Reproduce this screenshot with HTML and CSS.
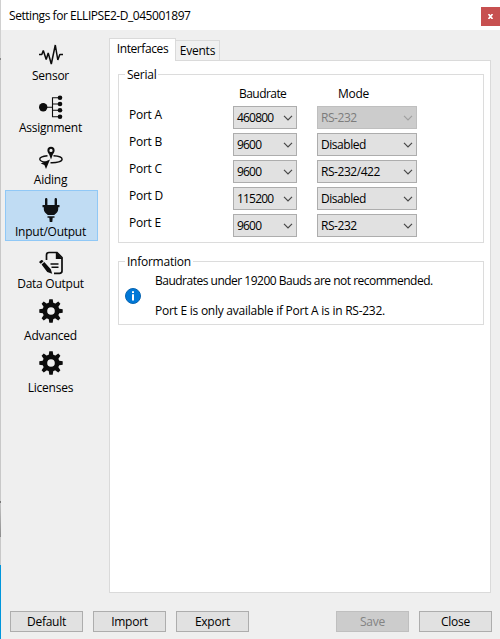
FILE: index.html
```html
<!DOCTYPE html>
<html lang="en">
<head>
<meta charset="utf-8">
<title>Settings for ELLIPSE2-D_045001897</title>
<link rel="stylesheet" href="styles.css">
</head>
<body>
<svg class="defs" width="0" height="0" aria-hidden="true">
  <symbol id="chevron" viewBox="0 0 10 6"><path d="M1 .8l4 4 4-4" fill="none" stroke="currentColor" stroke-width="1.2"/></symbol>
  <symbol id="gear" viewBox="0 0 24 24">
    <g fill="#0c0c0c">
      <path fill-rule="evenodd" d="M12 3.500a8.500 8.500 0 1 0 0 17 8.500 8.500 0 0 0 0-17zm0 4.700a3.800 3.800 0 1 1 0 7.600 3.800 3.800 0 0 1 0-7.600z"/>
      <path d="M10.300.3h3.400l.8 5h-5zM10.300 23.700h3.400l.8-5h-5zM.3 10.300v3.400l5 .8v-5zM23.700 10.300v3.400l-5 .8v-5z"/>
      <path transform="rotate(45 12 12)" d="M10.500.2h3l1 5h-5zM10.500 23.800h3l1-5h-5zM.2 10.500v3l5 1v-5zM23.800 10.500v3l-5 1v-5z"/>
    </g>
  </symbol>
</svg>
<div class="window">
  <div class="edge"><i class="e1"></i><i class="e2"></i><i class="e3"></i><i class="e4"></i><i class="e5"></i><i class="e6"></i><i class="e7"></i></div>
  <header class="titlebar">
    <h1>Settings for ELLIPSE2-D_045001897</h1>
    <button class="x" aria-label="Close window"><svg width="5" height="5" viewBox="0 0 5 5"><path d="M.5 0l4 5M4.500 0l-4 5" stroke="#fff" stroke-width="1.600"/></svg></button>
  </header>
  <div class="body">
    <nav class="side">
      <a class="item"><svg width="24" height="24" viewBox="0 0 24 24"><path d="M0 11.500h2.800l1.500-4 2.900 9 2-6.500 3.100 11L16.300 2l2.500 15 2-5.500H24" fill="none" stroke="#0c0c0c" stroke-width="1.500" stroke-linejoin="bevel"/></svg><span>Sensor</span></a>
      <a class="item"><svg width="24" height="24" viewBox="0 0 24 24"><g fill="#0c0c0c"><circle cx="4.200" cy="12.300" r="4.200"/><circle cx="21" cy="2.700" r="2.300"/><circle cx="21" cy="9" r="2.300"/><circle cx="21" cy="15.300" r="2.300"/><circle cx="21" cy="21.700" r="2.300"/></g><path d="M5 12.300h8.500M21 2.700h-7.500v19H21M13.500 9H21M13.500 15.300H21" fill="none" stroke="#0c0c0c" stroke-width="1.100"/></svg><span>Assignment</span></a>
      <a class="item aiding"><svg width="24" height="24" viewBox="0 0 24 24"><path d="M8.500 9.800C3.800 10.300.7 11.600.8 13.200c.1 1.500 2.500 2.600 6 3.100M14.500 9.800c5 .3 8.600 1.700 8.600 3.500 0 2.200-5 3.700-11.600 3.400" fill="none" stroke="#0c0c0c" stroke-width="1.400"/><path fill="#0c0c0c" fill-rule="evenodd" d="M12 .8a3.600 3.600 0 0 0-3.600 3.600c0 1.500.9 2.500 1.800 4L12 13.500l1.800-5.100c.9-1.500 1.800-2.500 1.800-4A3.600 3.600 0 0 0 12 .8zm0 2a1.600 1.600 0 1 1 0 3.200 1.600 1.600 0 0 1 0-3.200z"/><path fill="#0c0c0c" d="M11 13.500L7 23l-1.600-4L1.800 17.500z"/></svg><span>Aiding</span></a>
      <a class="item selected"><svg width="24" height="24" viewBox="0 0 24 24"><path fill="#101214" d="M6 1.200a1.200 1.200 0 0 1 2.400 0V7h7.200V1.200a1.200 1.200 0 0 1 2.400 0V7h2.500v2.300h-1.300v2c0 2.200-2 4.500-4 5.700H8.800c-2-1.200-4-3.500-4-5.700v-2H3.500V7H6zM8.500 18.300h7v1.500h-1.800L13.300 24h-2.600l-.4-4.200H8.500z"/></svg><span>Input/Output</span></a>
      <a class="item"><svg width="24" height="24" viewBox="0 0 24 24"><path d="M7.500 9V4q0-2.500 2.500-2.500h8l5 5V20q0 2.300-2.500 2.300H15" fill="none" stroke="#0c0c0c" stroke-width="1.700"/><path d="M16.800 1v7H23.500z" fill="#0c0c0c"/><path d="M11.500 13h8M12.500 16.300h7" stroke="#0c0c0c" stroke-width="1.400"/><path fill="#0c0c0c" d="M.3 10.700L2 9.200q.8-.6 1.500.1l1 1-2.600 2.500-1.300-1q-.8-.6-.3-1.100zM2.600 13.500l2.700-2.500 6.500 7.200 1.400 4.600-5-1.800z"/></svg><span>Data Output</span></a>
      <a class="item geared"><svg width="24" height="24"><use href="#gear"/></svg><span>Advanced</span></a>
      <a class="item geared"><svg width="24" height="24"><use href="#gear"/></svg><span>Licenses</span></a>
    </nav>
    <main class="content">
      <div class="tabs"><div class="tab active"><span>Interfaces</span></div><div class="tab"><span>Events</span></div></div>
      <div class="panel">
        <section class="group serial">
          <h2 class="legend">Serial</h2>
          <div class="heads"><span></span><span class="baud">Baudrate</span><span class="mode">Mode</span></div>
          <div class="row"><label>Port A</label><div class="combo rate"><span>460800</span><svg><use href="#chevron"/></svg></div><div class="combo disabled"><span>RS-232</span><svg><use href="#chevron"/></svg></div></div>
          <div class="row"><label>Port B</label><div class="combo rate"><span>9600</span><svg><use href="#chevron"/></svg></div><div class="combo"><span>Disabled</span><svg><use href="#chevron"/></svg></div></div>
          <div class="row"><label>Port C</label><div class="combo rate"><span>9600</span><svg><use href="#chevron"/></svg></div><div class="combo"><span>RS-232/422</span><svg><use href="#chevron"/></svg></div></div>
          <div class="row"><label>Port D</label><div class="combo rate"><span>115200</span><svg><use href="#chevron"/></svg></div><div class="combo"><span>Disabled</span><svg><use href="#chevron"/></svg></div></div>
          <div class="row"><label>Port E</label><div class="combo rate"><span>9600</span><svg><use href="#chevron"/></svg></div><div class="combo"><span>RS-232</span><svg><use href="#chevron"/></svg></div></div>
        </section>
        <section class="group info">
          <h2 class="legend">Information</h2>
          <svg class="info-icon" width="16" height="16" viewBox="0 0 16 16"><circle cx="8" cy="8" r="7.500" fill="#0078d7" stroke="#0864b0"/><path d="M7 3.200h2v1.900H7zM7 6.300h2v6.200H7z" fill="#fff"/></svg>
          <div class="notes"><p class="tight">Baudrates under 19200 Bauds are not recommended.</p><p>Port E is only available if Port A is in RS-232.</p></div>
        </section>
      </div>
    </main>
  </div>
  <footer class="actions">
    <button>Default</button><button>Import</button><button>Export</button><button class="save" disabled>Save</button><button>Close</button>
  </footer>
</div>
</body>
</html>
```
FILE: styles.css
```css
* { box-sizing: border-box; }
body {
  margin: 0;
  font: 12px/16px "Open Sans", "Noto Sans", sans-serif;
  letter-spacing: -0.25px;
  color: #000;
  white-space: nowrap;
}
h1, h2, p { margin: 0; font: inherit; }
button { font: inherit; letter-spacing: inherit; padding: 0; }
.defs { position: absolute; }
.window {
  position: relative;
  width: 500px;
  height: 639px;
  background: #efefef;
  padding-left: 1px;
  overflow: hidden;
}
.edge {
  position: absolute;
  left: 0;
  top: 0;
  width: 1px;
  height: 639px;
  display: flex;
  flex-direction: column;
}
.e1 { height: 58px; background: #d0d0d0; }
.e2 { height: 2px; background: #858585; }
.e3 { height: 441px; background: #c8c8c8; }
.e4 { height: 2px; background: #777; }
.e5 { height: 34px; background: linear-gradient(#c4c4c4, #8c8c8c); }
.e6 { height: 28px; background: #c8c8c8; }
.e7 { flex: 1; background: #0096dc; }

.titlebar {
  height: 30px;
  background: #fff;
  display: flex;
  align-items: center;
  justify-content: space-between;
  padding-left: 8px;
}
.titlebar h1 { letter-spacing: -0.45px; padding-top: 2px; }
.x {
  width: 19px;
  height: 19px;
  margin-top: 3px;
  border: 0;
  background: #c75050;
  display: flex;
  align-items: center;
  justify-content: center;
}
.body { display: flex; height: 563px; }
.side { width: 108px; padding: 4px 0 0 4px; }
.item {
  width: 93px;
  height: 51px;
  margin-bottom: 1px;
  padding: 8px 2px 0 0;
  border: 1px solid transparent;
  display: flex;
  flex-direction: column;
  align-items: center;
}
.item svg { display: block; flex: none; }
.item span { line-height: 17px; }
.selected { background: #c0dcf3; border-color: #90c8f6; }
.item.selected { padding-top: 7px; }
.selected span { margin-top: 1px; }
.item.aiding { padding-top: 7px; }
.aiding span { margin-top: 1px; }
.item.geared { padding-top: 4px; }
.geared span { margin-top: 4px; }

.content { width: 382px; padding-top: 8px; }
.tabs { display: flex; align-items: flex-end; height: 23px; position: relative; z-index: 1; }
.tab {
  height: 21px;
  width: 44px;
  border: 1px solid #dadada;
  border-left: 0;
  background: #f0f0f0;
  text-align: center;
  line-height: 20px;
}
.tab.active {
  width: 67px;
  height: 23px;
  border: 1px solid #dadada;
  border-bottom: 0;
  background: #fff;
  letter-spacing: -0.4px;
}
.panel {
  height: 533px;
  margin-top: -1px;
  padding: 13px 6px 0 8px;
  background: #fff;
  border: 1px solid #dadada;
}
.group { border: 1px solid #dcdcdc; position: relative; width: 366px; }
.legend {
  position: absolute;
  top: -8px;
  left: 6px;
  padding: 0 2px;
  background: #fff;
}
.serial { height: 169px; padding: 11px 0 0 10px; }
.heads, .row { display: grid; grid-template-columns: 104px 64px 100px; }
.row { height: 27px; }
.row .combo:last-child { margin-left: 20px; width: 100px; }
.heads { height: 20px; }
.baud { padding-left: 6px; letter-spacing: -0.55px; }
.mode { padding-left: 41px; }
.row label { line-height: 17px; }
.combo {
  height: 23px;
  border: 1px solid #adadad;
  background: #e1e1e1;
  padding: 0 3px;
  display: flex;
  align-items: center;
  justify-content: space-between;
  letter-spacing: -0.45px;
}
.rate { letter-spacing: -0.8px; }
.combo svg { width: 10px; height: 6px; color: #484848; flex: none; }
.combo.disabled { background: #ccc; border-color: #bfbfbf; color: #7c7c7c; }
.combo.disabled svg { color: #a0a0a0; }
.info {
  height: 64px;
  margin-top: 18px;
  display: flex;
  align-items: center;
  padding: 5px 0 0 6px;
}
.notes { margin: 1px 0 0 14px; display: flex; flex-direction: column; gap: 14px; }
.tight { letter-spacing: -0.5px; }
.actions { display: flex; gap: 10px; padding: 18px 8px 0 9px; }
.actions button {
  width: 73px;
  height: 21px;
  border: 1px solid #adadad;
  background: #e1e1e1;
  color: #000;
  line-height: 19px;
}
.actions .save { margin-left: 77px; background: #ccc; border-color: #bfbfbf; color: #838383; }
```
